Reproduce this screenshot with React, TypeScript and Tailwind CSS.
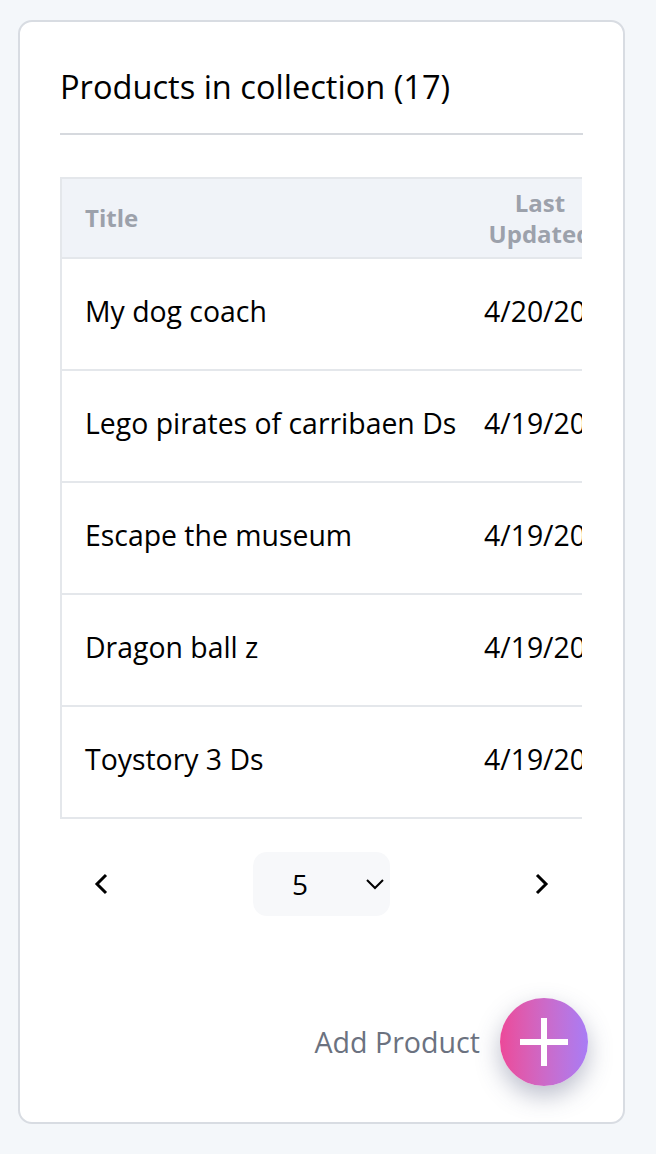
import React from "react";

const rows = [
  ["My dog coach", "4/20/2020"],
  ["Lego pirates of carribaen Ds", "4/19/2020"],
  ["Escape the museum", "4/19/2020"],
  ["Dragon ball z", "4/19/2020"],
  ["Toystory 3 Ds", "4/19/2020"],
];

export default function App() {
  return (
    <div
      className="w-[656px] h-[1154px] bg-[#f4f7fa] pt-[20px] pl-[18px]"
      style={{ fontFamily: '"Open Sans", sans-serif' }}
    >
      <div className="w-[607px] h-[1104px] bg-white border-2 border-[#d8dce2] rounded-[14px] pl-[40px] pr-[40px] pt-[42px]">
        <div className="text-[32.6px] leading-[46px] text-black pb-[23px] border-b-2 border-[#d6d9de]">
          Products in collection (17)
        </div>
        <div className="mt-[42px] w-[522px] overflow-hidden">
          <div className="w-[700px] border-l-2 border-t-2 border-[#e4e7eb]">
            <div className="flex h-[80px] bg-[#f0f3f8] border-b-2 border-[#e4e7eb] items-center text-[24px] font-bold text-[#9ca1ab]">
              <div className="w-[408px] pl-[23px]">Title</div>
              <div className="w-[140px] text-center leading-[31px]">
                Last
                <br />
                Updated
              </div>
            </div>
            {rows.map(([t, d]) => (
              <div
                key={t}
                className="flex h-[112px] items-center border-b-2 border-[#e4e7eb] text-[28.4px] text-black pb-[5px]"
              >
                <div className="w-[422px] pl-[23px] whitespace-nowrap">{t}</div>
                <div className="whitespace-nowrap">{d}</div>
              </div>
            ))}
          </div>
        </div>
        <div className="flex items-center justify-between mt-[33px] px-[32px]">
          <svg width="18" height="24" viewBox="0 0 18 24" fill="none">
            <path d="M14 3 L5 12 L14 21" stroke="black" strokeWidth="3" />
          </svg>
          <div className="w-[137px] h-[64px] rounded-[14px] bg-[#f7f8fa] flex items-center pl-[39px] pr-[5px] justify-between">
            <span className="text-[28px] text-black">5</span>
            <svg width="20" height="12" viewBox="0 0 20 12" fill="none">
              <path d="M2 2 L10 10 L18 2" stroke="black" strokeWidth="2" />
            </svg>
          </div>
          <svg width="18" height="24" viewBox="0 0 18 24" fill="none">
            <path d="M4 3 L13 12 L4 21" stroke="black" strokeWidth="3" />
          </svg>
        </div>
        <div className="flex items-center justify-end mt-[82px] mr-[-5px] gap-[20px]">
          <span className="text-[28.6px] text-[#6b7280]">Add Product</span>
          <div className="w-[88px] h-[88px] rounded-full bg-gradient-to-r from-[#ec4899] to-[#a87cf5] flex items-center justify-center shadow-[0_10px_24px_rgba(60,70,110,0.35)]">
            <svg width="52" height="52" viewBox="0 0 52 52">
              <path d="M26 2 V50 M2 26 H50" stroke="white" strokeWidth="6" />
            </svg>
          </div>
        </div>
      </div>
    </div>
  );
}
